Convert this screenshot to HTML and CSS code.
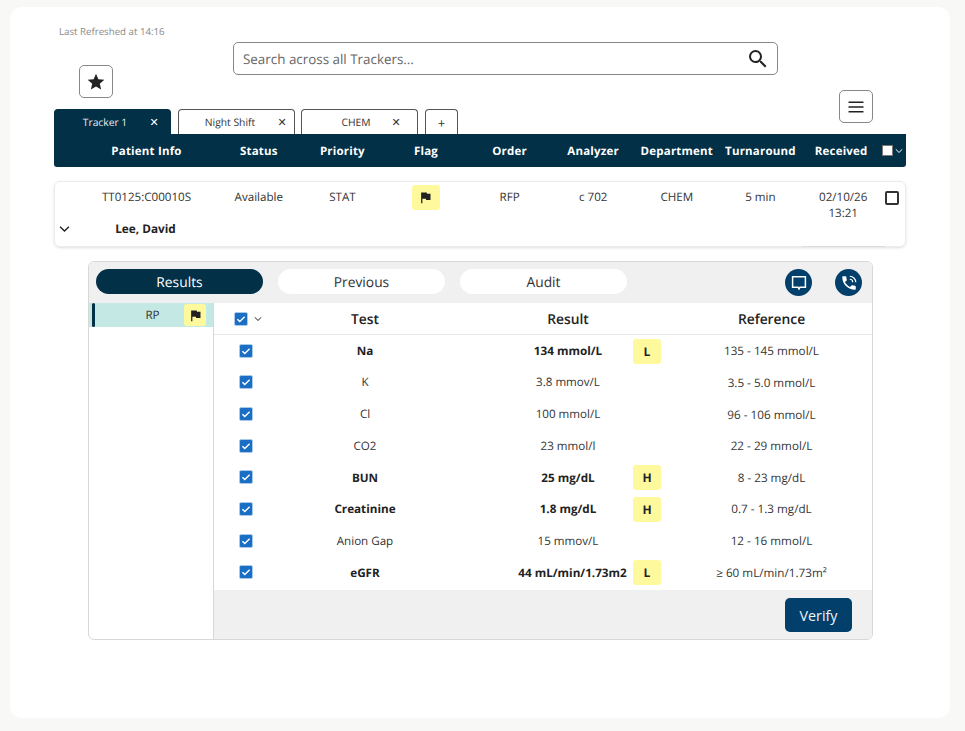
FILE: index.html
```html
<!DOCTYPE html>
<html lang="en">
<head>
<meta charset="utf-8">
<title>Trackers</title>
<link rel="stylesheet" href="styles.css">
</head>
<body>
<svg class="defs" width="0" height="0" aria-hidden="true">
  <symbol id="flag" viewBox="0 0 24 24"><path d="M14.4 6L14 4H5v17h2v-7h5.6l.4 2h7V6z"/></symbol>
  <symbol id="check" viewBox="0 0 14 14"><rect x="0.5" y="0.5" width="13" height="13" rx="1.5" fill="#1a6fc4" stroke="#a9c9e8"/><path d="M3.4 7.2l2.4 2.4 4.8-4.8" fill="none" stroke="#fff" stroke-width="1.4"/></symbol>
  <symbol id="chev" viewBox="0 0 12 8"><path d="M1.2 1.5L6 6.2l4.8-4.7" fill="none" stroke="currentColor" stroke-width="1.5"/></symbol>
</svg>
<main class="card">
  <p class="refreshed">Last Refreshed at 14:16</p>
  <div class="top">
    <button class="icon-btn star-btn" aria-label="Favourites">
      <svg width="20" height="20" viewBox="0 0 24 24"><path fill="#222" d="M12 17.27L18.18 21l-1.64-7.03L22 9.24l-7.19-.61L12 2 9.19 8.63 2 9.24l5.46 4.73L5.82 21z"/></svg>
    </button>
    <div class="search">
      <span>Search across all Trackers...</span>
      <svg width="24" height="24" viewBox="0 0 24 24"><path fill="#222" d="M15.5 14h-.79l-.28-.27A6.47 6.47 0 0 0 16 9.5 6.5 6.5 0 1 0 9.5 16c1.61 0 3.09-.59 4.23-1.57l.27.28v.79l5 4.99L20.49 19l-4.99-5zm-6 0C7.01 14 5 11.99 5 9.5S7.01 5 9.5 5 14 7.01 14 9.5 11.99 14 9.5 14z"/></svg>
    </div>
  </div>
  <div class="tabs-row">
    <div class="tabs">
      <div class="tab active t1"><span>Tracker 1</span><i>✕</i></div>
      <div class="tab t2"><span>Night Shift</span><i>✕</i></div>
      <div class="tab t3"><span>CHEM</span><i>✕</i></div>
      <div class="tab plus">+</div>
    </div>
    <button class="icon-btn menu-btn" aria-label="Menu">
      <svg width="16" height="12" viewBox="0 0 16 12"><path fill="none" stroke="#222" stroke-width="1.5" d="M.5 1.2h15M.5 6h15M.5 10.8h15"/></svg>
    </button>
  </div>
  <div class="grid-cols head">
    <div>Patient Info</div><div>Status</div><div>Priority</div><div>Flag</div><div>Order</div><div>Analyzer</div><div>Department</div><div>Turnaround</div><div>Received</div>
    <div class="head-check"><b></b><svg width="8" height="6"><use href="#chev"/></svg></div>
  </div>
  <div class="patient">
    <div class="grid-cols line">
      <div>TT0125:C00010S</div><div>Available</div><div>STAT</div>
      <div><span class="flag-badge"><svg width="15" height="15"><use href="#flag"/></svg></span></div>
      <div>RFP</div><div>c 702</div><div>CHEM</div><div>5 min</div>
      <div class="date">02/10/26<br>13:21</div>
      <div><span class="box"></span></div>
    </div>
    <div class="name-row">
      <svg width="11" height="8"><use href="#chev"/></svg>
      <strong>Lee, David</strong>
    </div>
    <div class="strip"></div>
  </div>
  <section class="panel">
    <div class="panel-head">
      <div class="pill on">Results</div>
      <div class="pill">Previous</div>
      <div class="pill">Audit</div>
      <div class="round r1">
        <svg width="18" height="18" viewBox="0 0 18 18"><path fill="none" stroke="#fff" stroke-width="1.5" d="M2.6 2.8h12.8v10.4H10L9 15l-1-1.8H2.6z"/></svg>
      </div>
      <div class="round">
        <svg width="18" height="18" viewBox="0 0 24 24"><path fill="#fff" d="M6.6 10.8c1.4 2.8 3.8 5.1 6.6 6.6l2.2-2.2c.3-.3.7-.4 1-.2 1.1.4 2.3.6 3.6.6.6 0 1 .4 1 1V20c0 .6-.4 1-1 1C10.6 21 3 13.4 3 4c0-.6.4-1 1-1h3.5c.6 0 1 .4 1 1 0 1.3.2 2.5.6 3.6.1.3 0 .7-.2 1z"/><path fill="none" stroke="#fff" stroke-width="1.5" d="M13 7a4 4 0 0 1 4 4M13 3a8 8 0 0 1 8 8"/></svg>
      </div>
    </div>
    <div class="panel-body">
      <aside class="side">
        <div class="side-item"><span>RP</span><em class="flag-badge small"><svg width="15" height="15"><use href="#flag"/></svg></em></div>
      </aside>
      <div class="results">
        <div class="row hdr">
          <div class="ck"><svg class="c" width="14" height="14"><use href="#check"/></svg><svg class="dn" width="8" height="6"><use href="#chev"/></svg></div>
          <div>Test</div><div class="res">Result</div><div></div><div class="ref">Reference</div>
        </div>
        <div class="row bold"><div class="ck"><svg width="14" height="14"><use href="#check"/></svg></div><div>Na</div><div class="res">134 mmol/L</div><div><span class="bdg">L</span></div><div class="ref">135 - 145 mmol/L</div></div>
        <div class="row"><div class="ck"><svg width="14" height="14"><use href="#check"/></svg></div><div>K</div><div class="res">3.8 mmov/L</div><div></div><div class="ref">3.5 - 5.0 mmol/L</div></div>
        <div class="row"><div class="ck"><svg width="14" height="14"><use href="#check"/></svg></div><div>Cl</div><div class="res">100 mmol/L</div><div></div><div class="ref">96 - 106 mmol/L</div></div>
        <div class="row"><div class="ck"><svg width="14" height="14"><use href="#check"/></svg></div><div>CO2</div><div class="res">23 mmol/l</div><div></div><div class="ref">22 - 29 mmol/L</div></div>
        <div class="row bold"><div class="ck"><svg width="14" height="14"><use href="#check"/></svg></div><div>BUN</div><div class="res">25 mg/dL</div><div><span class="bdg">H</span></div><div class="ref">8 - 23 mg/dL</div></div>
        <div class="row bold"><div class="ck"><svg width="14" height="14"><use href="#check"/></svg></div><div>Creatinine</div><div class="res">1.8 mg/dL</div><div><span class="bdg">H</span></div><div class="ref">0.7 - 1.3 mg/dL</div></div>
        <div class="row"><div class="ck"><svg width="14" height="14"><use href="#check"/></svg></div><div>Anion Gap</div><div class="res">15 mmov/L</div><div></div><div class="ref">12 - 16 mmol/L</div></div>
        <div class="row bold"><div class="ck"><svg width="14" height="14"><use href="#check"/></svg></div><div>eGFR</div><div class="res wide">44 mL/min/1.73m2</div><div><span class="bdg">L</span></div><div class="ref">≥ 60 mL/min/1.73m²</div></div>
        <div class="foot"><button class="verify">Verify</button></div>
      </div>
    </div>
  </section>
</main>
</body>
</html>
```
FILE: styles.css
```css
* { box-sizing: border-box; }
html, body { margin: 0; height: 731px; overflow: hidden; }
body { background: #f8f8f6; padding: 7px 15px 13px 10px; font-family: "Open Sans", sans-serif; color: #333; text-rendering: geometricPrecision; }
.defs { position: absolute; }
.card { background: #fff; border-radius: 12px; height: 711px; padding: 18px 44px 0 44px; }
.refreshed { margin: 1px 0 -1px 5px; font-size: 9.7px; line-height: 12px; color: #8a8a8a; }
.top { display: flex; align-items: flex-start; height: 54px; padding: 5px 0 0 25px; }
.search { margin-left: 120px; width: 545px; height: 33px; border: 1px solid #888; border-radius: 5px; display: flex; align-items: center; justify-content: space-between; padding: 0 7px 0 9px; font-size: 13.4px; color: #666; }
.icon-btn { width: 34px; height: 33px; padding: 0; background: #fff; border: 1px solid #888; border-radius: 5px; display: flex; align-items: center; justify-content: center; }
.star-btn { margin-top: 23px; }
.tabs-row { display: flex; justify-content: space-between; align-items: flex-end; height: 43px; }
.tabs { display: flex; gap: 7px; }
.tab { width: 117px; height: 25px; padding-top: 1px; background: #fff; border: 1px solid #555; border-bottom: 0; border-radius: 4px 4px 0 0; display: flex; align-items: center; font-size: 10.3px; color: #333; }
.tab span { flex: none; text-align: center; }
.tab i { flex: none; width: 13px; font-style: normal; font-size: 11px; text-align: center; color: #333; }
.t1 span { width: 100px; }
.t1 i { margin-left: -7.5px; }
.t2 span { width: 102px; }
.t2 i { margin-left: -5.5px; }
.t3 { margin-left: -1px; }
.t3 span { width: 108px; }
.t3 i { margin-left: -20.5px; }
.tab.active { background: #023047; border-color: #023047; color: #e8eef2; }
.tab.active i { color: #fff; }
.tab.plus { width: 33px; justify-content: center; font-size: 13px; }
.menu-btn { margin: 0 33px 11px 0; }
.grid-cols { display: grid; grid-template-columns: 22px 141px repeat(7, 83.6px) 78px 26px; align-items: start; text-align: center; width: 852px; }
.grid-cols > div:first-child { grid-column: 2; }
.head { height: 33px; background: #023047; color: #fff; border-radius: 0 0 3px 3px; font-size: 11.5px; font-weight: 700; letter-spacing: .2px; line-height: 35px; }
.head-check { display: flex; align-items: center; height: 33px; padding-left: 2px; gap: 2px; color: #fff; }
.head-check b { width: 11px; height: 11px; background: #fff; border: 1px solid #777; display: block; }
.patient { position: relative; margin-top: 14px; width: 852px; height: 66px; border: 1px solid #ececec; border-radius: 6px; box-shadow: 0 1px 3px rgba(0,0,0,.13); font-size: 11.6px; color: #333; }
.line { margin-left: -1px; padding-top: 6px; height: 36px; line-height: 19px; }
.flag-badge { display: inline-flex; align-items: center; justify-content: center; width: 28px; height: 25px; margin-top: -3px; background: #fff99e; border-radius: 3px; color: #222; fill: #222; }
.date { line-height: 16px; padding: 2px 0 0 4px; }
.box { display: block; width: 14px; height: 14px; border: 2px solid #333; border-radius: 2px; margin: 3px 0 0 5px; }
.name-row { display: grid; grid-template-columns: 20px 141px; align-items: center; height: 22px; font-size: 11.8px; color: #222; }
.name-row svg { margin-left: 4px; }
.name-row strong { grid-column: 2; text-align: center; font-weight: 700; }
.strip { position: absolute; right: 20px; bottom: -1px; width: 83px; height: 1px; background: #dcdcdc; }
.panel { margin: 14px 0 0 34px; width: 785px; height: 379px; border: 1px solid #d8d8d8; border-radius: 6px; overflow: hidden; }
.panel-head { display: flex; align-items: center; height: 41px; background: #f0f0f0; padding: 0 10px 0 7px; }
.pill { width: 167px; height: 25px; margin-bottom: 2px; border-radius: 13px; background: #fff; margin-right: 15px; text-align: center; font-size: 13.8px; line-height: 27px; font-weight: 500; color: #333; }
.pill.on { background: #023047; color: #fff; }
.round { width: 27px; height: 27px; border-radius: 50%; background: #023f6a; display: flex; align-items: center; justify-content: center; }
.r1 { margin-left: 143px; margin-right: 23px; }
.panel-body { display: flex; height: 336px; }
.side { width: 125px; border-right: 1px solid #d8d8d8; }
.side-item { height: 24px; background: #c4e8e3; display: flex; align-items: center; font-size: 11.6px; padding-left: 3px; }
.side-item::before { content: ""; width: 3px; height: 24px; border-radius: 2px; background: #023047; }
.side-item span { flex: 1; text-align: center; padding-left: 26px; }
.flag-badge.small { width: 22px; height: 22px; margin: 0 7px 0 0; }
.results { flex: 1; display: flex; flex-direction: column; }
.row { display: grid; grid-template-columns: 62px 178px 173px 40px 1fr; align-items: center; height: 31.64px; text-align: center; font-size: 11.6px; color: #333; }
.row > div:not(.ck) { padding-top: 1px; }
.ck { display: flex; align-items: center; padding-left: 25px; }
.ck svg { display: block; }
.hdr { height: 32px; border-bottom: 1px solid #e6e6e6; font-size: 13.8px; font-weight: 600; color: #222; }
.hdr .ck { padding-left: 21px; gap: 6px; margin-left: -1px; }
.bold { font-weight: 700; font-size: 11.7px; color: #222; }
.res { padding-left: 55px; }
.wide { padding-left: 64px; white-space: nowrap; }
.ref { padding-left: 4px; }
.row:not(.hdr) .ref { font-weight: 400; color: #333; font-size: 11.7px; }
.bdg { display: inline-block; width: 28px; height: 25px; line-height: 25px; background: #fff99e; border-radius: 3px; font-size: 12px; font-weight: 700; vertical-align: top; }
.foot { flex: 1; margin-top: 2px; background: #f0f0f0; display: flex; justify-content: flex-end; align-items: flex-start; padding: 8px 20px 0 0; }
.verify { width: 67px; height: 34px; background: #023f6a; color: #eef3f6; border: 0; border-radius: 5px; font: 500 14.3px "Open Sans", sans-serif; }
```
